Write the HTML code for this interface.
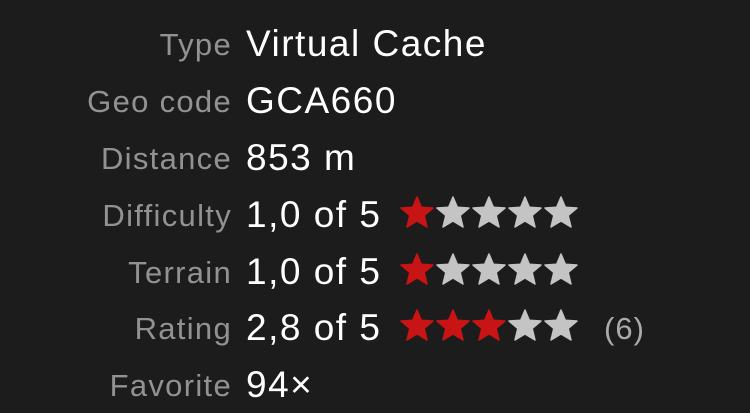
<!DOCTYPE html>
<html><head><style>
body{margin:0;width:750px;height:413px;background:#1c1c1c;overflow:hidden;font-family:"Liberation Sans",sans-serif;}
.r{position:absolute;left:0;height:40px;width:750px;}
.l{position:absolute;right:518px;bottom:0;color:#929292;font-size:31px;line-height:31px;letter-spacing:1.3px;white-space:nowrap;}
.v{position:absolute;left:246px;bottom:-2px;color:#fff;font-size:37px;line-height:37px;letter-spacing:1.5px;white-space:nowrap;}
.s{position:absolute;left:400px;top:3px;}
.c{position:absolute;left:604px;bottom:0;color:#aaa;font-size:31px;line-height:31px;letter-spacing:1px;}
</style></head><body>
<svg width="0" height="0" style="position:absolute"><defs>
<path id="st" d="M17 1 L21.3 11.2 L33 12 L24.2 19.4 L27 31 L17 25 L7 31 L9.8 19.4 L1 12 L12.7 11.2 Z" stroke-linejoin="round" stroke-width="1.5"/>
</defs></svg>
<div class="r" style="top:20px"><span class="l">Type</span><span class="v">Virtual Cache</span></div>
<div class="r" style="top:77px"><span class="l">Geo code</span><span class="v">GCA660</span></div>
<div class="r" style="top:134px"><span class="l">Distance</span><span class="v">853 m</span></div>
<div class="r" style="top:191px"><span class="l">Difficulty</span><span class="v">1,0 of 5</span>
<svg class="s" width="180" height="36"><g transform="translate(0,2)"><use href="#st" fill="#c81414" stroke="#c81414"/><use href="#st" x="36" fill="#c4c4c4" stroke="#c4c4c4"/><use href="#st" x="72" fill="#c4c4c4" stroke="#c4c4c4"/><use href="#st" x="108" fill="#c4c4c4" stroke="#c4c4c4"/><use href="#st" x="144" fill="#c4c4c4" stroke="#c4c4c4"/></g></svg></div>
<div class="r" style="top:248px"><span class="l">Terrain</span><span class="v">1,0 of 5</span>
<svg class="s" width="180" height="36"><g transform="translate(0,2)"><use href="#st" fill="#c81414" stroke="#c81414"/><use href="#st" x="36" fill="#c4c4c4" stroke="#c4c4c4"/><use href="#st" x="72" fill="#c4c4c4" stroke="#c4c4c4"/><use href="#st" x="108" fill="#c4c4c4" stroke="#c4c4c4"/><use href="#st" x="144" fill="#c4c4c4" stroke="#c4c4c4"/></g></svg></div>
<div class="r" style="top:304px"><span class="l">Rating</span><span class="v">2,8 of 5</span>
<svg class="s" width="180" height="36"><g transform="translate(0,2)"><use href="#st" fill="#c81414" stroke="#c81414"/><use href="#st" x="36" fill="#c81414" stroke="#c81414"/><use href="#st" x="72" fill="#c81414" stroke="#c81414"/><use href="#st" x="108" fill="#c4c4c4" stroke="#c4c4c4"/><use href="#st" x="144" fill="#c4c4c4" stroke="#c4c4c4"/></g></svg><span class="c">(6)</span></div>
<div class="r" style="top:361px"><span class="l">Favorite</span><span class="v">94×</span></div>
</body></html>
